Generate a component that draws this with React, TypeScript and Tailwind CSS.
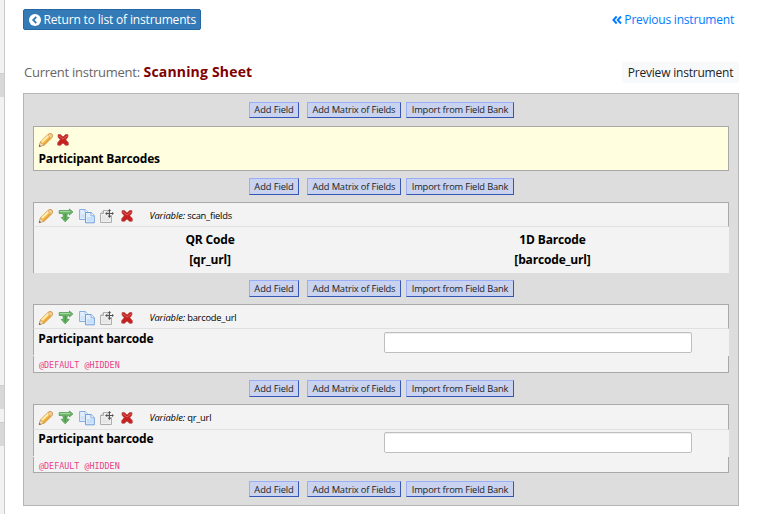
import React from "react";

function Pencil() {
  return (
    <svg className="block h-4 w-4 shrink-0" viewBox="0 0 16 16">
      <path d="M1.2 14.4 2.6 9.8 10 2.4Q12 .6 14 2.2 15.4 4 13.8 5.8L6.2 13.2Z" fill="#f6bd52" stroke="#cf8a2a" strokeWidth=".8" />
      <path d="M3.9 10.2 10.6 3.5" stroke="#fff0b4" strokeWidth="1.8" />
      <path d="M5.6 12.4 12.6 5.4" stroke="#e9a337" strokeWidth="1.4" />
      <path d="M10.4 2.4Q12 .9 13.8 2.4 15.2 4 13.9 5.5L13 6.3 9.7 3.1Z" fill="#f4cf9d" stroke="#cf9a58" strokeWidth=".6" />
      <path d="M1.1 14.6 2.4 10.3 5.8 13.3Z" fill="#f5e0bf" stroke="#b98a55" strokeWidth=".5" />
      <path d="M1 14.8 1.5 13 3 14.2Z" fill="#444" />
    </svg>
  );
}

function Branch() {
  return (
    <svg className="block h-4 w-4 shrink-0" viewBox="0 0 16 16">
      <path d="M1.2 2.6H11.4V1L14.9 4 11.4 7V5.5H10.3Q9 5.6 9 7.2V9.4H11.2L7.2 13.8 3.2 9.4H5.3V7.2Q5.2 5.6 3.8 5.5H1.2Z" fill="#6cb568" stroke="#4a9b4c" strokeWidth=".8" strokeLinejoin="round" />
      <path d="M1.8 3.6H12" fill="none" stroke="#b4deac" strokeWidth=".9" />
      <path d="M7.2 5.4V12" stroke="#479a46" strokeWidth="1.4" />
    </svg>
  );
}

function Copy() {
  return (
    <svg className="block h-4 w-4 shrink-0" viewBox="0 0 16 16">
      <path d="M.6 1.5H6.2L9 4.3V11.5H.6Z" fill="#e3effc" stroke="#86aee2" />
      <path d="M6 1.5V4.5H9" fill="#f6faff" stroke="#86aee2" strokeWidth=".8" />
      <path d="M2 6H6V10H2Z" fill="#cfe3fa" />
      <path d="M6.5 4.5H12.2L15.3 7.6V14.8H6.5Z" fill="#e0eefd" stroke="#739fd9" />
      <path d="M12 4.5V7.8H15.2" fill="#f4f9ff" stroke="#739fd9" strokeWidth=".8" />
      <path d="M8 9H13.8V13.5H8Z" fill="#c6dffa" />
    </svg>
  );
}

function Move() {
  return (
    <svg className="block h-4 w-4 shrink-0" viewBox="0 0 16 16">
      <path d="M4.5 2.5H9V7.5H12.5V14.5H1.5V5.5Z" fill="#f0f0f0" stroke="#adadad" />
      <path d="M4.5 2.5V5.5H1.5" fill="#ddd" stroke="#aaa" />
      <path d="M3 8H7M3 10H11M3 12H11" stroke="#dedede" />
      <path d="M10.5 2V9M7 5.5H14" stroke="#555" />
      <path d="M8.9 3 10.5 1.1 12.1 3ZM8.9 8 10.5 9.9 12.1 8ZM8 3.9 6.1 5.5 8 7.1ZM13 3.9 14.9 5.5 13 7.1Z" fill="#4b4b4b" />
    </svg>
  );
}

function Cross() {
  return (
    <svg className="block h-4 w-4 shrink-0" viewBox="0 0 16 16">
      <path d="M3 2.8 5.3 2.6 8 5.1 10.7 2.6 13 2.8 12.7 5.2 10.7 7.8 13.2 10.6V13.1L10.7 13.3 8 10.9 5.3 13.3 2.8 13.1V10.6L5.3 7.8 3.2 5.2Z" fill="#c8201f" stroke="#b23a38" strokeWidth=".8" strokeLinejoin="round" />
      <path d="M3.8 3.8 8 7 12.2 3.8" fill="none" stroke="#df6863" strokeWidth=".9" />
    </svg>
  );
}

const smallButton =
  "shrink-0 whitespace-nowrap border border-t-[#9aaef8] border-l-[#9aaef8] border-r-[#3556b4] border-b-[#3556b4] bg-[#c9d2ee] text-center text-[9.33px] text-[#222]";

function AddBar({
  className = "h-[31px] pt-[7px]",
  size = "h-[17px] leading-[15px]",
}: {
  className?: string;
  size?: string;
}) {
  return (
    <div className={`flex pl-[225px] ${className}`}>
      <button className={`${smallButton} ${size} w-[50px] tracking-[-0.1px]`}>Add Field</button>
      <button className={`${smallButton} ${size} ml-2 w-[94px] tracking-[-0.17px]`}>Add Matrix of Fields</button>
      <button className={`${smallButton} ${size} ml-[5px] w-[108px] tracking-[-0.18px]`}>Import from Field Bank</button>
    </div>
  );
}

function FieldHeader({ name, tall = false }: { name: string; tall?: boolean }) {
  return (
    <div className={`flex border border-[#a9a9a9] border-b-[#e0e0e0] pl-1 pt-[5px] ${tall ? "h-[26px]" : "h-[25px]"}`}>
      <div className="flex w-[111px] gap-[4.3px]">
        <Pencil />
        <Branch />
        <Copy />
        <Move />
        <Cross />
      </div>
      <div className="pl-[0.4px] text-[9.33px] leading-4 tracking-[-0.22px] text-black">
        <i className="tracking-[-0.1px]">Variable:</i> {name}
      </div>
    </div>
  );
}

function BarcodeField({ name, tall = false }: { name: string; tall?: boolean }) {
  return (
    <div className="flex h-[69px] flex-col bg-[#f3f3f3]">
      <FieldHeader name={name} tall={tall} />
      <div className="flex h-[26px] border-l border-[#a9a9a9] pl-1">
        <div className={`w-[346px] pl-[0.3px] text-[12px] font-bold leading-4 tracking-[-0.18px] text-black ${tall ? "pt-px" : "pt-[2px]"}`}>
          Participant barcode
        </div>
        <input
          aria-label={name}
          className={`h-[21px] w-[308px] rounded-[2px] border border-[#bfbfbf] bg-white shadow-[inset_0_1px_0_#eee] ${tall ? "mt-[2px]" : "mt-[3px]"}`}
        />
      </div>
      <div className="mt-px flex-1 border border-t-0 border-[#a9a9a9] pl-[5px] pt-[3px] font-['DejaVu_Sans_Mono',monospace] text-[8.4px] leading-[12px] text-[#e83e8c]">
        @DEFAULT @HIDDEN
      </div>
    </div>
  );
}

export default function App() {
  return (
    <div className="flex h-[514px] w-[771px] overflow-hidden bg-white font-['Open_Sans',sans-serif]">
      <div className="flex w-[5px] flex-col border-r border-[#ccc] bg-[#f2f2f2]">
        <div className="mt-[73px] h-6 border-t border-[#ccc] bg-[#d8d8d8]" />
        <div className="mt-[288px] h-6 border-t border-[#ccc] bg-[#d8d8d8]" />
        <div className="mt-[13px] h-6 border-t border-[#ccc] bg-[#d8d8d8]" />
      </div>
      <div className="ml-[18px] w-[716px]">
        <div className="flex h-[62px] items-start justify-between pt-[9px]">
          <button className="flex h-[21px] w-[178px] items-center rounded-[2px] border border-[#2567a4] bg-[#337ab7] pl-[5px] text-[12px] leading-[19px] tracking-[-0.16px] whitespace-nowrap text-white">
            <svg className="mr-[2.5px] h-3 w-3 shrink-0" viewBox="0 0 12 12">
              <circle cx="6" cy="6" r="6" fill="white" />
              <path d="M7.3 2.8 4.2 6 7.3 9.2" fill="none" stroke="#337ab7" strokeWidth="1.8" />
            </svg>
            Return to list of instruments
          </button>
          <a className="mr-[5px] flex items-center text-[12px] leading-[21px] tracking-[-0.2px] whitespace-nowrap text-[#007bff]">
            <svg className="mr-[2px] h-[10px] w-[10px]" viewBox="0 0 10 10">
              <path d="M4.7 1.5 1.4 5 4.7 8.5M9 1.5 5.7 5 9 8.5" fill="none" stroke="currentColor" strokeWidth="1.9" />
            </svg>
            Previous instrument
          </a>
        </div>
        <div className="flex h-[31px] items-start justify-between">
          <div className="flex whitespace-pre pl-px leading-[21px]">
            <span className="w-[119.5px] text-[13px] tracking-[-0.26px] text-[#666]">Current instrument: </span>
            <span className="-mt-px text-[14px] font-bold tracking-[0.18px] text-[#800000]">Scanning Sheet</span>
          </div>
          <button className="h-[21px] w-[117px] rounded-[2px] bg-[#f8f9fa] text-[12px] leading-[21px] tracking-[-0.2px] whitespace-nowrap text-[#212529]">
            Preview instrument
          </button>
        </div>
        <div className="h-[413px] border border-[#b5b5b5] bg-[#ddd]">
          <AddBar className="h-8 pt-2" size="h-4 leading-[14px]" />
          <div className="mx-[9px]">
            <div className="h-[45px] border border-[#a9a9a9] bg-[#ffffe0] pl-1 pt-[5px]">
              <div className="flex gap-px">
                <Pencil />
                <Cross />
              </div>
              <div className="mt-[3px] pl-[0.5px] text-[12px] font-bold leading-4 tracking-[-0.18px] text-black">Participant Barcodes</div>
            </div>
          </div>
          <AddBar />
          <div className="mx-[9px] h-[71px] bg-[#f3f3f3]">
            <FieldHeader name="scan_fields" />
            <div className="grid h-[46px] grid-cols-[352px_333px] grid-rows-[20px_20px] border-l border-[#a9a9a9] pt-[3px] text-center text-[12px] font-bold leading-5 tracking-[-0.16px] text-black">
              <div>QR Code</div>
              <div>1D Barcode</div>
              <div>[qr_url]</div>
              <div>[barcode_url]</div>
            </div>
          </div>
          <AddBar />
          <div className="mx-[9px]">
            <BarcodeField name="barcode_url" />
          </div>
          <AddBar />
          <div className="mx-[9px]">
            <BarcodeField name="qr_url" tall />
          </div>
          <AddBar className="h-8 pt-2" size="h-4 leading-[15px]" />
        </div>
      </div>
    </div>
  );
}
